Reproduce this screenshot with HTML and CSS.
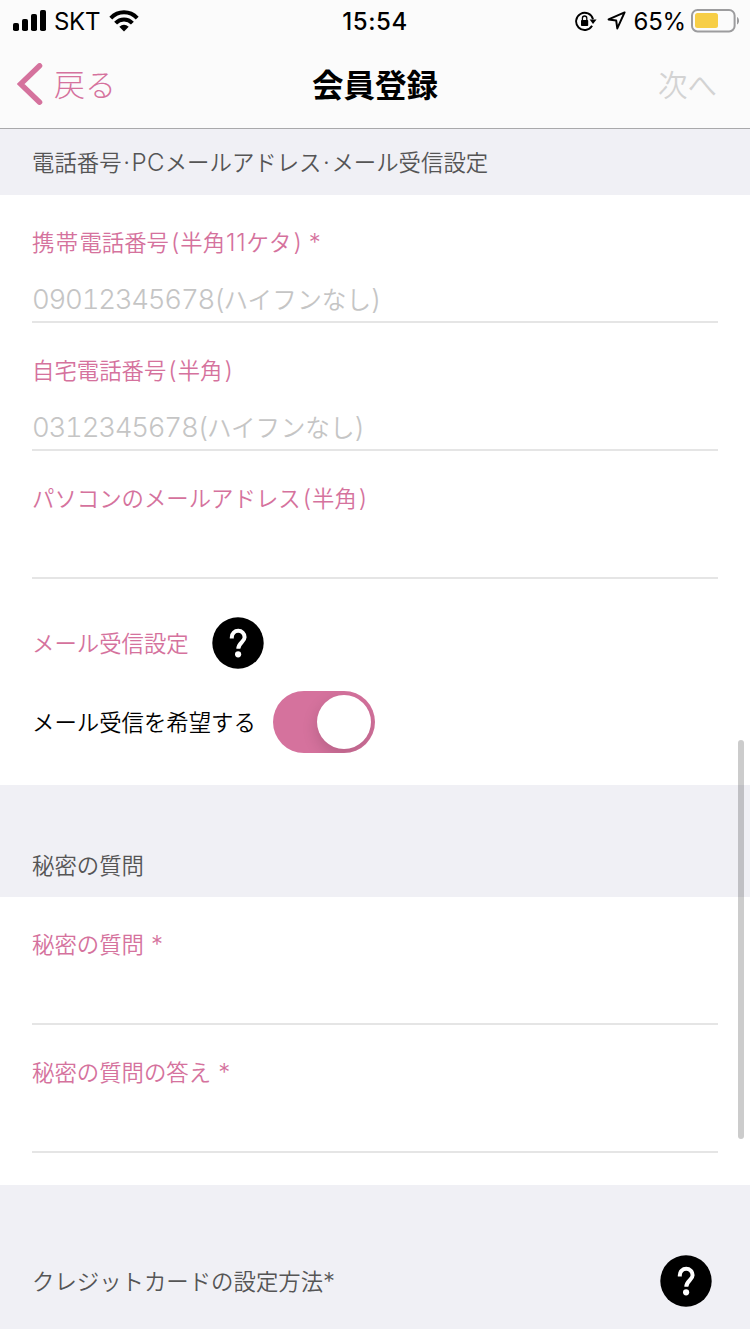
FILE: index.html
```html
<!DOCTYPE html>
<html lang="ja">
<head>
<meta charset="utf-8">
<title>会員登録</title>
<link rel="stylesheet" href="styles.css">
</head>
<body>
<div class="screen">
  <header class="top">
    <div class="status">
      <div class="status-left">
        <svg class="signal" width="34" height="22" viewBox="0 0 34 22"><rect x="0" y="13" width="6" height="8" rx="1.8"/><rect x="9" y="9" width="6" height="12" rx="1.8"/><rect x="18" y="4" width="6" height="17" rx="1.8"/><rect x="27" y="0" width="6" height="21" rx="1.8"/></svg>
        <span class="carrier">SKT</span>
        <svg class="wifi" width="30" height="22" viewBox="0 0 30 22"><g fill="none" stroke="#000" stroke-width="4"><path d="M1.8 8.1C9.2 .4 20.8 .4 28.2 8.1"/><path d="M6.6 13.2C11.3 8.3 18.7 8.3 23.4 13.2"/></g><path d="M10.3 16.8Q15 12.8 19.7 16.8L15 21.6Z"/></svg>
      </div>
      <div class="clock">15:54</div>
      <div class="status-right">
        <svg class="lock" width="22" height="20" viewBox="0 0 22 20"><path d="M17.1 14.8A8.6 8.6 0 1 1 18 8.2" fill="none" stroke="#000" stroke-width="1.9"/><path d="M14.6 8.6h7L18 13Z"/><rect x="6" y="9" width="7.2" height="6" rx=".8"/><path d="M7.4 9.4V7.2a2.2 2.2 0 0 1 4.4 0V9.4" fill="none" stroke="#000" stroke-width="1.3"/></svg>
        <svg class="arrow" width="19" height="19" viewBox="0 0 19 19"><path d="M17.6 1.4L1.6 8.4L9.2 9.6L10.3 17.4Z" fill="none" stroke="#000" stroke-width="2" stroke-linejoin="round"/></svg>
        <span class="percent">65%</span>
        <svg class="battery" width="48" height="24" viewBox="0 0 48 24"><rect x="1" y="1" width="42.6" height="21.4" rx="5.5" fill="none" stroke="#9c9c9e" stroke-width="2"/><rect x="4" y="4" width="23" height="15" rx="2.5" fill="#f7ce46"/><path d="M46 8C48.7 9 48.7 14.5 46 15.5Z" fill="#9c9c9e"/></svg>
      </div>
    </div>
    <nav class="nav">
      <div class="back"><svg width="26" height="42" viewBox="0 0 26 42"><path d="M22.6 2.8L3.6 21L22.6 39.2" fill="none" stroke="#d5729d" stroke-width="5.4" stroke-linecap="round" stroke-linejoin="miter"/></svg><span>戻る</span></div>
      <h1 class="title">会員登録</h1>
      <div class="next">次へ</div>
    </nav>
  </header>
  <main>
    <h2 class="section"><span>電話番号<b class="dot">·</b><b class="latin">PC</b>メールアドレス<b class="dot">·</b>メール受信設定</span></h2>
    <section class="group">
      <div class="field"><label><span class="wide">携帯</span>電話番号<b class="open">(</b>半角<b class="ones">11</b>ケタ<b class="close">)</b><b class="star">*</b></label><div class="value"><b>09012345678(</b>ハイフンなし<b>)</b></div></div>
      <div class="field"><label>自宅電話番号<b class="open">(</b>半角<b class="close">)</b></label><div class="value"><b>0312345678(</b>ハイフンなし<b>)</b></div></div>
      <div class="field"><label>パソコンのメールアドレス<b class="open">(</b>半角<b class="close">)</b></label></div>
      <div class="mail-title"><span>メール受信設定</span><svg class="help" viewBox="0 0 52 52"><circle cx="26" cy="26" r="25.7"/><path d="M19.8 21.5V20.2A6.4 6.4 0 0 1 32.6 20.2C32.6 25 26.3 25.6 26.3 31.8" fill="none" stroke="#fff" stroke-width="4"/><circle cx="26.1" cy="37.3" r="3.1" fill="#fff"/></svg></div>
      <div class="mail-row"><span>メール受信を希望する</span><div class="switch"><div class="knob"></div></div></div>
    </section>
    <h2 class="section spaced"><span>秘密の質問</span></h2>
    <section class="group secret">
      <div class="field"><label>秘密の質問<b class="star">*</b></label></div>
      <div class="field"><label>秘密の質問の答え<b class="star">*</b></label></div>
    </section>
    <h2 class="section card"><span>クレジットカードの設定方法<b>*</b></span><svg class="help" viewBox="0 0 52 52"><circle cx="26" cy="26" r="25.7"/><path d="M19.8 21.5V20.2A6.4 6.4 0 0 1 32.6 20.2C32.6 25 26.3 25.6 26.3 31.8" fill="none" stroke="#fff" stroke-width="4"/><circle cx="26.1" cy="37.3" r="3.1" fill="#fff"/></svg></h2>
  </main>
  <div class="scrollbar"></div>
</div>
</body>
</html>
```
FILE: styles.css
```css
* { box-sizing: border-box; }
body { margin: 0; background: #fff; font-family: "Noto Sans CJK JP", sans-serif; font-weight: 350; }
.screen { position: relative; width: 750px; height: 1334px; overflow: hidden; background: #fff; }
svg { display: block; flex: none; }
b { font-family: Inter, sans-serif; font-weight: 350; font-size: 24px; letter-spacing: 0; }

.top { height: 129px; background: #fbfbfb; border-bottom: 1px solid #a9a9ab; }
.status { display: grid; grid-template-columns: 1fr auto 1fr; height: 40px; align-items: center; padding: 0 11px 0 13px; font: 400 24px/38px Inter, sans-serif; }
.status-left, .status-right { display: flex; align-items: center; }
.status-right { justify-content: flex-end; }
.signal { margin-right: 7px; }
.carrier, .clock, .percent { padding-top: 3px; }
.carrier { letter-spacing: -.3px; }
.wifi { margin-left: 9px; }
.clock { padding-right: 2px; font-weight: 500; font-size: 24px; letter-spacing: .6px; }
.lock { margin-right: 10px; }
.arrow { margin-right: 8px; }
.percent { margin-right: 5px; letter-spacing: -.2px; }
.nav { display: grid; grid-template-columns: 1fr auto 1fr; height: 88px; align-items: center; padding: 0 17px; font-size: 31px; font-weight: 300; line-height: 44px; }
.back { display: flex; align-items: center; gap: 11px; color: #d5729d; }
.back span, .title, .next { padding-bottom: 3px; }
.title { margin: 0; font-size: 31.5px; font-weight: 700; line-height: 44px; }
.next { padding-right: 16px; font-size: 29.5px; font-weight: 350; text-align: right; color: #d3d3d3; }

.section { display: flex; align-items: center; height: 66px; margin: 0; padding: 0 38px 0 32px; background: #f0f0f5; color: #555; font-size: 22.4px; font-weight: 350; line-height: 32px; white-space: nowrap; }
.section span { padding-bottom: 1px; }
.dot { display: inline-block; width: 10px; text-align: center; }
.latin { letter-spacing: .3px; }
.spaced { height: 112px; padding-top: 47px; }
.card { height: 144px; padding-top: 48px; justify-content: space-between; }

.group { padding: 0 32px; height: 590px; }
.secret { height: 288px; }
.field { display: flex; flex-direction: column; height: 128px; padding-top: 30px; border-bottom: 2px solid #e5e5e5; }
label { color: #d5729d; font-size: 22.4px; line-height: 32px; white-space: nowrap; }
.wide { letter-spacing: 1.3px; }
.open { margin: 0 1px 0 2px; }
.close { margin-left: 2px; }
.ones { margin-left: 1px; letter-spacing: .8px; }
.star { margin-left: 7px; }
.value { margin-top: 21px; color: #c5c5c5; font-size: 24.6px; line-height: 36px; white-space: nowrap; }
.value b { font-size: 27.5px; letter-spacing: -1.25px; font-feature-settings: "tnum"; }
.mail-title { display: flex; align-items: center; gap: 23px; height: 52px; margin-top: 38px; color: #d5729d; font-size: 22.4px; }
.mail-title span, .mail-row span { padding-bottom: 3px; }
.help { width: 52px; height: 52px; }
.mail-row { display: flex; align-items: center; gap: 17px; height: 62px; margin-top: 22px; font-size: 22.4px; }
.switch { display: flex; justify-content: flex-end; width: 102px; height: 62px; padding: 4px; border-radius: 31px; background: #d5729d; overflow: hidden; }
.knob { width: 54px; height: 54px; border-radius: 50%; background: #fff; box-shadow: 0 6px 16px rgba(0,0,0,.15); }
.scrollbar { position: absolute; left: 738px; top: 740px; width: 6px; height: 399px; border-radius: 3px; background: rgba(0,0,0,.2); }
```
